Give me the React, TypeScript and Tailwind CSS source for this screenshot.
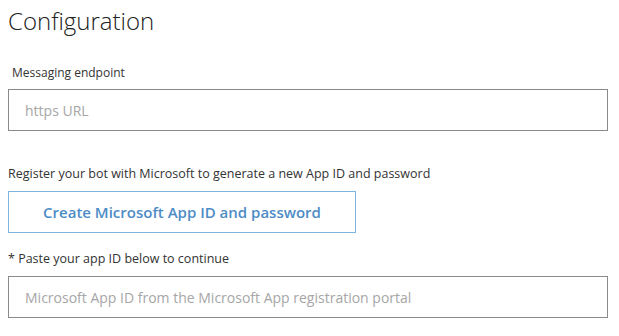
export default function App() {
  return (
    <div className="w-[619px] h-[336px] bg-white text-[#333] overflow-hidden" style={{ fontFamily: '"Open Sans", "Noto Sans", sans-serif' }}>
      <div className="pl-2 pt-[5px] w-[608px]">
        <h1 className="text-[24px] leading-[32px] font-light text-[#222]">Configuration</h1>

        <label className="block mt-[28px] pl-1 text-[12px] leading-[16px] text-[#333]">Messaging endpoint</label>
        <input
          className="block mt-[8px] w-[600px] h-[42px] border border-[#8a8a8a] px-4 text-[14px] placeholder:text-[#a6a6a6] outline-none"
          placeholder="https URL"
        />

        <p className="mt-[35px] text-[12.5px] leading-[16px] text-[#333]">
          Register your bot with Microsoft to generate a new App ID and password
        </p>
        <button className="mt-[9px] w-[348px] h-[42px] border border-[#7fb4dd] text-[#4d8cc6] text-[15px] font-semibold">
          Create Microsoft App ID and password
        </button>

        <p className="mt-[18px] text-[12.5px] leading-[16px] text-[#333]">* Paste your app ID below to continue</p>
        <input
          className="block mt-[9px] w-[600px] h-[42px] border border-[#8a8a8a] px-4 text-[14px] placeholder:text-[#a6a6a6] outline-none"
          placeholder="Microsoft App ID from the Microsoft App registration portal"
        />
      </div>
    </div>
  )
}
